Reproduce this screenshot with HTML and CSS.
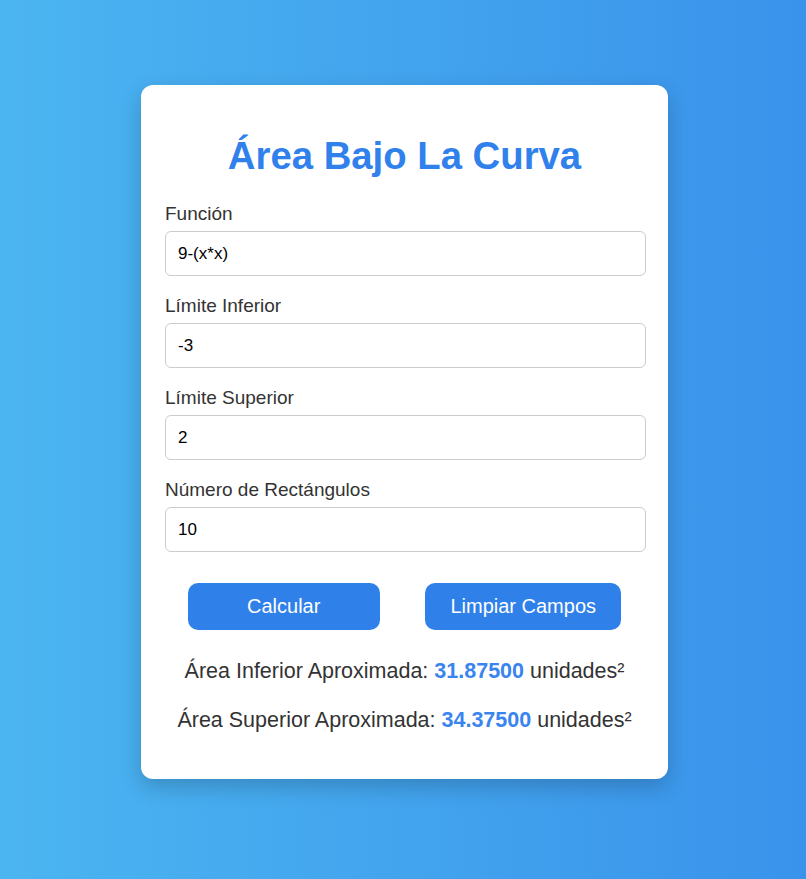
FILE: index.html
```
<!DOCTYPE html>
<html lang="es">
<head>
<meta charset="utf-8">
<title>Área Bajo La Curva</title>
<link rel="stylesheet" href="styles.css">
</head>
<body>
<main class="card">
  <h1 class="title">Área Bajo La Curva</h1>
  <div class="field">
    <label class="label" for="f">Función</label>
    <input class="input" id="f" type="text" value="9-(x*x)">
  </div>
  <div class="field">
    <label class="label" for="a">Límite Inferior</label>
    <input class="input" id="a" type="text" value="-3">
  </div>
  <div class="field">
    <label class="label" for="b">Límite Superior</label>
    <input class="input" id="b" type="text" value="2">
  </div>
  <div class="field">
    <label class="label" for="n">Número de Rectángulos</label>
    <input class="input" id="n" type="text" value="10">
  </div>
  <div class="actions">
    <button class="btn" type="button">Calcular</button>
    <button class="btn" type="button">Limpiar Campos</button>
  </div>
  <div class="results">
    <p class="result">Área Inferior Aproximada: <strong class="num">31.87500</strong> unidades²</p>
    <p class="result">Área Superior Aproximada: <strong class="num">34.37500</strong> unidades²</p>
  </div>
</main>
</body>
</html>
```
FILE: styles.css
```
* { box-sizing: border-box; }

html, body { height: 100%; }

body {
  margin: 0;
  padding: 85px 0 0 3px;
  display: flex;
  justify-content: center;
  align-items: flex-start;
  background: linear-gradient(to right, #4bb5f1, #3a93eb);
  font-family: "Liberation Sans", Arial, sans-serif;
  color: #333;
}

.card {
  width: 527px;
  background: #fff;
  border-radius: 12px;
  padding: 24px;
  box-shadow: 0 8px 22px rgba(0, 0, 0, 0.2);
}

.title {
  margin: 25px 0 25px;
  font-size: 38.3px;
  line-height: 44px;
  font-weight: 700;
  text-align: center;
  color: #3181ec;
}

.field {
  margin-bottom: 19px;
}

.label {
  display: block;
  font-size: 19px;
  line-height: 22px;
  margin-bottom: 6px;
  color: #333;
}

.input {
  display: block;
  width: calc(100% + 2px);
  height: 45px;
  padding: 0 12px;
  border: 1px solid #ccc;
  border-radius: 6px;
  font-family: "Liberation Sans", Arial, sans-serif;
  font-size: 17px;
  color: #000;
  background: #fff;
  outline: none;
}

.actions {
  display: flex;
  justify-content: space-around;
  margin-top: 31px;
  margin-bottom: 29px;
}

.btn {
  min-width: 40%;
  padding: 12px 25px;
  border: none;
  border-radius: 10px;
  background: #3080ea;
  color: #fff;
  font-family: "Liberation Sans", Arial, sans-serif;
  font-size: 20px;
  line-height: 23px;
  cursor: pointer;
}

.results {
  display: flex;
  flex-direction: column;
  gap: 23.5px;
  margin-bottom: 22.5px;
}

.result {
  margin: 0;
  font-size: 21.5px;
  line-height: 25px;
  text-align: center;
  color: #333;
}

.num {
  color: #3a84ef;
  font-weight: 700;
}
```
